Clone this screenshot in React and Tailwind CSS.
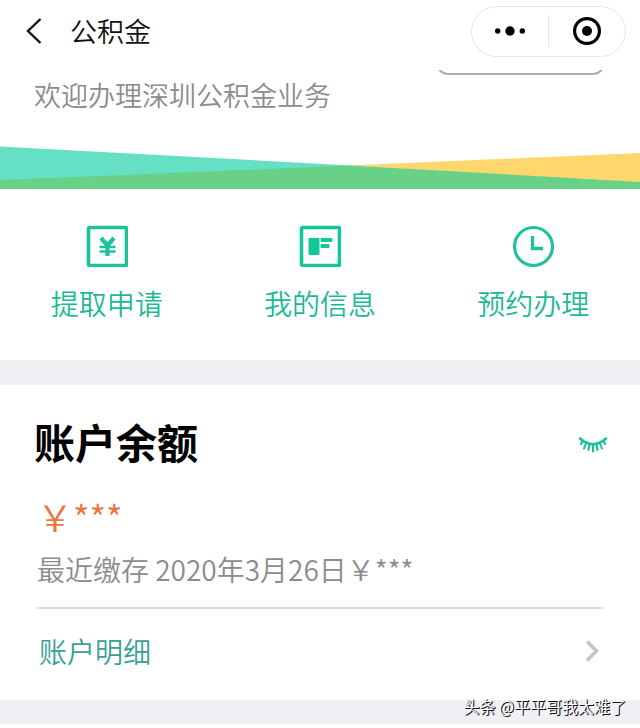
const services = [
  { label: '提取申请', icon: WithdrawIcon },
  { label: '我的信息', icon: ProfileIcon },
  { label: '预约办理', icon: ClockIcon },
];

function WithdrawIcon() {
  return (
    <svg viewBox="0 0 42 42" className="size-[42px]" fill="none" stroke="#1cc298" aria-hidden="true">
      <rect x="2.5" y="2.5" width="38" height="38" rx="1" strokeWidth="3.6" />
      <path d="M15 13 21.5 20.5 28 13M21.5 19v12" strokeWidth="4.2" />
      <path d="M13.500 22h16M13.500 26.500h16" strokeWidth="2.6" />
    </svg>
  );
}

function ProfileIcon() {
  return (
    <svg viewBox="0 0 42 42" className="size-[42px]" fill="#12c899" aria-hidden="true">
      <rect x="2.5" y="2.5" width="38" height="38" rx="1" fill="none" stroke="#12c899" strokeWidth="3.6" />
      <rect x="9.5" y="13" width="11" height="17" rx="1" />
      <rect x="21.5" y="13" width="12" height="4" rx="1" />
      <rect x="21.5" y="19" width="9" height="4" rx="1" />
    </svg>
  );
}

function ClockIcon() {
  return (
    <svg viewBox="0 0 42 42" className="size-[42px]" fill="none" stroke="#1fc29a" aria-hidden="true">
      <circle cx="21.5" cy="21.5" r="19" strokeWidth="3.2" />
      <path d="M20.5 11v12.5H31" strokeWidth="3.4" />
    </svg>
  );
}

function ClosedEyeIcon() {
  return (
    <svg viewBox="0 0 28 16" className="h-4 w-7" fill="none" stroke="#16c098" strokeLinecap="round" aria-hidden="true">
      <path d="M1 1.5Q14 13 27 1.5" strokeWidth="2.6" />
      <path d="M3.5 4 2 7M7 6.5 5 11.5M10.5 8l-1 5M14 8.5v6M17.5 8l1 5M21 6.5l2 5M24.5 4 26 7" strokeWidth="2" />
    </svg>
  );
}

function Header() {
  return (
    <header className="flex h-[70px] items-center justify-between bg-white pr-[14px] pb-2 pl-[26px]">
      <div className="flex items-center gap-7">
        <button type="button" aria-label="返回">
          <svg viewBox="0 0 16 26" className="h-[26px] w-4" fill="none" stroke="#111" strokeWidth="2.4" aria-hidden="true">
            <path d="M14.5 1 2 13l12.5 12" />
          </svg>
        </button>
        <h1 className="text-[27px] leading-10 text-[#111]">公积金</h1>
      </div>

      {/* Mini program capsule */}
      <div className="flex h-[51px] w-[155px] items-center rounded-full border border-[#e6e6e6]">
        <button type="button" aria-label="更多" className="flex flex-1 justify-center">
          <svg viewBox="0 0 30 10" className="h-[10px] w-[30px]" fill="#000" aria-hidden="true">
            <circle cx="2.7" cy="5" r="2.7" />
            <circle cx="15" cy="5" r="4.7" />
            <circle cx="27.3" cy="5" r="2.7" />
          </svg>
        </button>
        <span className="h-8 w-px bg-[#e6e6e6]" />
        <button type="button" aria-label="关闭" className="flex flex-1 justify-center">
          <svg viewBox="0 0 28 28" className="size-7" aria-hidden="true">
            <circle cx="14" cy="14" r="12.4" fill="none" stroke="#000" strokeWidth="3.2" />
            <circle cx="14" cy="14" r="5" fill="#000" />
          </svg>
        </button>
      </div>
    </header>
  );
}

function Hero() {
  return (
    <section className="relative overflow-hidden">
      {/* Bottom edge of the city picker, scrolled under the header */}
      <div className="absolute -top-8 right-[35px] h-[37px] w-[169px] rounded-xl border-2 border-[#b0b0b0]" />
      <p className="px-[34px] pt-[5px] text-[27px] leading-10 text-[#8c8c8c]">欢迎办理深圳公积金业务</p>
      <svg viewBox="0 0 640 44" preserveAspectRatio="none" className="mt-[30px] block h-11 w-full" aria-hidden="true">
        <path d="M0 1.5 360 21 0 36Z" fill="#66e0c5" />
        <path d="M350 20.5 640 8v30Z" fill="#ffd76c" />
        <path d="M0 35 350 20.5 640 37v7H0Z" fill="#66d187" />
      </svg>
    </section>
  );
}

function Services() {
  return (
    <nav className="grid grid-cols-3 pt-9 pb-[37px]">
      {services.map(({ label, icon: Icon }) => (
        <button key={label} type="button" className="flex flex-col items-center gap-4 text-[28px] leading-10 text-[#1db996]">
          <Icon />
          {label}
        </button>
      ))}
    </nav>
  );
}

function Account() {
  return (
    <section className="px-[37px]">
      <div className="flex items-center justify-between pt-[26px]">
        <h2 className="-ml-[3px] text-[41px] leading-[60px] font-bold text-black">账户余额</h2>
        <button type="button" aria-label="显示余额" className="-mr-1 pt-2">
          <ClosedEyeIcon />
        </button>
      </div>
      <p className="mt-5 text-[36px] leading-[50px] text-[#ee743f]">￥***</p>
      <p className="mt-2 border-b-2 border-[#dcdcdc] pb-[18px] text-[28px] leading-10 text-[#8c8c8c]">
        最近缴存 2020年3月26日￥***
      </p>
      <a href="#detail" className="flex h-[91px] items-center justify-between pb-2 pl-0.5 text-[28px] leading-10 text-[#3a9f94]">
        账户明细
        <svg viewBox="0 0 14 22" className="mr-1 h-[22px] w-[14px]" fill="none" stroke="#c4c4c4" strokeWidth="3.6" aria-hidden="true">
          <path d="M2 1.5 11.5 11 2 20.5" />
        </svg>
      </a>
    </section>
  );
}

export default function App() {
  return (
    <div className="bg-white font-['Noto_Sans_CJK_SC',sans-serif] font-[350]">
      <Header />
      <Hero />
      <Services />
      <div className="h-[25px] bg-[#efeff4]" />
      <Account />
      <footer className="flex h-6 items-start justify-end bg-[#efeff4] pr-[14px]">
        <span className="text-base leading-3 text-white [text-shadow:1px_1px_0_#111,1px_0_0_#333]">
          头条 @平平哥我太难了
        </span>
      </footer>
    </div>
  );
}
